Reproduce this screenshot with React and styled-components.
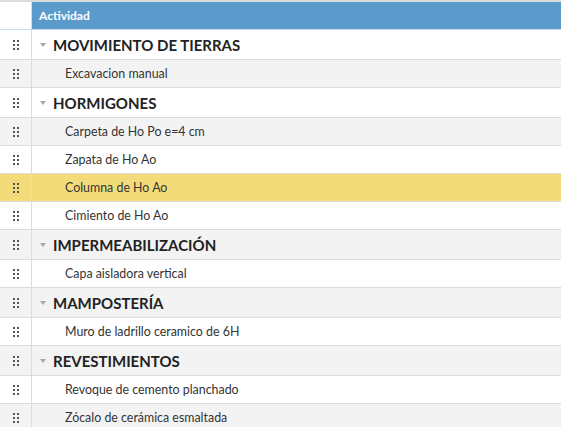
import styled, { createGlobalStyle } from "styled-components";

const GlobalStyle = createGlobalStyle`
  html, body {
    margin: 0;
    padding: 0;
    background: #ffffff;
    font-family: Lato, "Noto Sans", sans-serif;
  }
`;

const Grid = styled.div`
  width: 561px;
  height: 427px;
  overflow: hidden;
  border-top: 2px solid #dcdcdc;
  box-sizing: border-box;
`;

const HeaderRow = styled.div`
  display: grid;
  grid-template-columns: 32px 1fr;
  height: 27px;
  border-bottom: 1px solid #c9dcee;
  box-sizing: content-box;
`;

const HeaderHandle = styled.div`
  background: #ffffff;
  border-right: 1px solid #dcdcdc;
`;

const HeaderCell = styled.div`
  background: #5b9bcb;
  color: #ffffff;
  font-size: 12px;
  font-weight: 700;
  display: flex;
  align-items: center;
  padding-left: 7px;
`;

const Row = styled.div`
  display: grid;
  grid-template-columns: 32px 1fr;
  height: ${(p) => (p.$group ? 29 : 27)}px;
  border-bottom: 1px solid #dcdcdc;
  background: ${(p) => (p.$selected ? "#f4db7a" : p.$odd ? "#f3f3f3" : "#ffffff")};
`;

const HandleCell = styled.div`
  border-right: 1px solid #dcdcdc;
  display: flex;
  align-items: center;
  justify-content: center;
`;

const Dots = styled.div`
  display: grid;
  grid-template-columns: repeat(2, 2px);
  grid-template-rows: repeat(3, 2px);
  gap: 2px;
  span {
    background: #555555;
    width: 2px;
    height: 2px;
  }
`;

const TextCell = styled.div`
  display: flex;
  align-items: center;
  padding-left: ${(p) => (p.$group ? 8 : 33)}px;
  color: ${(p) => (p.$group ? "#222222" : "#333333")};
  font-size: ${(p) => (p.$group ? 15 : 12.4)}px;
  font-weight: ${(p) => (p.$group ? 700 : 400)};
  white-space: nowrap;
`;

const Caret = styled.span`
  width: 0;
  height: 0;
  border-left: 3.5px solid transparent;
  border-right: 3.5px solid transparent;
  border-top: 4px solid #a8a8a8;
  margin-right: 7px;
  margin-top: 1px;
`;

const rows = [
  { text: "MOVIMIENTO DE TIERRAS", group: true },
  { text: "Excavacion manual" },
  { text: "HORMIGONES", group: true },
  { text: "Carpeta de Ho Po e=4 cm" },
  { text: "Zapata de Ho Ao" },
  { text: "Columna de Ho Ao", selected: true },
  { text: "Cimiento de Ho Ao" },
  { text: "IMPERMEABILIZACIÓN", group: true },
  { text: "Capa aisladora vertical" },
  { text: "MAMPOSTERÍA", group: true },
  { text: "Muro de ladrillo ceramico de 6H" },
  { text: "REVESTIMIENTOS", group: true },
  { text: "Revoque de cemento planchado" },
  { text: "Zócalo de cerámica esmaltada" },
];

function DragHandle() {
  return (
    <HandleCell>
      <Dots>
        <span />
        <span />
        <span />
        <span />
        <span />
        <span />
      </Dots>
    </HandleCell>
  );
}

export default function App() {
  return (
    <>
      <GlobalStyle />
      <Grid>
        <HeaderRow>
          <HeaderHandle />
          <HeaderCell>Actividad</HeaderCell>
        </HeaderRow>
        {rows.map((r, i) => (
          <Row key={r.text} $group={r.group} $odd={i % 2 === 1} $selected={r.selected}>
            <DragHandle />
            <TextCell $group={r.group}>
              {r.group && <Caret />}
              {r.text}
            </TextCell>
          </Row>
        ))}
      </Grid>
    </>
  );
}
